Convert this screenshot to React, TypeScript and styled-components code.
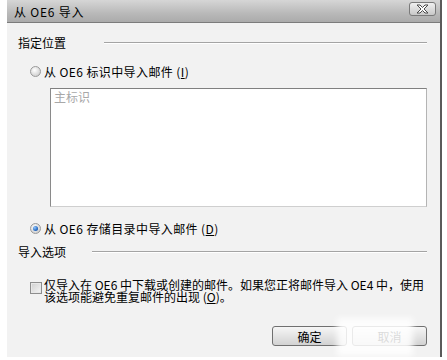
import React from 'react';
import styled, { createGlobalStyle } from 'styled-components';

const GlobalStyle = createGlobalStyle`
  html, body {
    margin: 0;
    padding: 0;
    background: #ffffff;
  }
  body {
    font-family: 'Noto Sans CJK SC', 'DejaVu Sans', sans-serif;
    font-size: 12px;
    color: #000;
  }
`;

const Page = styled.div`
  width: 447px;
  height: 360px;
  padding-left: 7px;
  box-sizing: border-box;
  overflow: hidden;
`;

const Dialog = styled.div`
  position: relative;
  width: 435px;
  height: 357px;
  display: flex;
  flex-direction: column;
  background: #f2f2f2;
  border-right: 2px solid #5a5a5a;
  box-sizing: border-box;
`;

const TitleBar = styled.div`
  height: 22px;
  flex: none;
  display: flex;
  align-items: center;
  justify-content: space-between;
  padding: 0 4px 0 7px;
  background: linear-gradient(#d6d6d6, #b9b9b9 60%, #ababab);
  border-bottom: 1px solid #7c7c7c;
  font-size: 12px;
  letter-spacing: 0.8px;
`;

const CloseButton = styled.div`
  width: 27px;
  height: 14px;
  margin-top: -4px;
  display: flex;
  align-items: center;
  justify-content: center;
  border: 1px solid #7a7a7a;
  border-radius: 3px;
  background: linear-gradient(#f0f0f0, #c8c8c8);
  box-sizing: border-box;
`;

const Content = styled.div`
  flex: 1;
  display: flex;
  flex-direction: column;
  padding: 12px 13px 0 11px;
`;

const Heading = styled.div`
  display: flex;
  align-items: center;
  height: 16px;
  line-height: 16px;
  margin-top: ${(p: { $top: number }) => p.$top}px;
`;

const HeadingRule = styled.div`
  flex: 1;
  height: 1px;
  margin-left: ${(p: { $gap: number }) => p.$gap}px;
  background: #a4a4a4;
  border-bottom: 1px solid #ffffff;
`;

const OptionRow = styled.label`
  display: flex;
  align-items: center;
  height: 16px;
  margin-left: 12px;
  margin-top: ${(p: { $top: number }) => p.$top}px;
  gap: 3px;
  white-space: pre;
  letter-spacing: 0.4px;
`;

const Radio = styled.span<{ $checked?: boolean }>`
  width: 11px;
  height: 11px;
  border-radius: 50%;
  box-sizing: border-box;
  border: 1px solid #9a9a9a;
  background: radial-gradient(circle at 40% 35%, #ffffff, #d4d4d4 70%, #bcbcbc);
  display: flex;
  align-items: center;
  justify-content: center;

  &::after {
    content: '';
    display: ${(p) => (p.$checked ? 'block' : 'none')};
    width: 5px;
    height: 5px;
    border-radius: 50%;
    background: radial-gradient(circle at 35% 35%, #8fc6ff, #1c5fb8 70%, #0d3a80);
  }
`;

const Mnemonic = styled.span`
  text-decoration: underline;
`;

const TextBox = styled.div`
  margin: 9px 0 0 32px;
  height: 119px;
  background: #ffffff;
  border-top: 1px solid #808080;
  border-left: 1px solid #8a8a8a;
  border-right: 1px solid #b4b4b4;
  border-bottom: 1px solid #cfcfcf;
  box-sizing: border-box;
  padding: 0 3px;
  color: #a8a8a8;
  line-height: 16px;
`;

const CheckRow = styled.div`
  display: flex;
  align-items: flex-start;
  gap: 2px;
  margin: 19px 0 0 12px;
`;

const CheckBox = styled.span`
  flex: none;
  width: 12px;
  height: 12px;
  margin-top: 3px;
  box-sizing: border-box;
  border: 1px solid #8e8e8e;
  background: linear-gradient(135deg, #cfcfcf, #f6f6f6);
  box-shadow: inset 0 0 0 1px #e8e8e8;
`;

const CheckText = styled.div`
  display: flex;
  flex-direction: column;
  white-space: pre;
`;

const CheckLine = styled.div`
  height: 12px;
  line-height: 12px;
`;

const ButtonBar = styled.div`
  display: flex;
  justify-content: flex-end;
  gap: 5px;
  margin: auto 0 11px 0;
`;

const Button = styled.div`
  width: 75px;
  height: 20px;
  display: flex;
  align-items: center;
  justify-content: center;
  box-sizing: border-box;
  border: 1px solid #707070;
  border-radius: 3px;
  background: linear-gradient(#f6f6f6, #e4e4e4 50%, #d2d2d2);
  font-size: 12px;
`;

const Watermark = styled.div`
  position: absolute;
  left: 330px;
  top: 318px;
  width: 76px;
  height: 38px;
  background: rgba(255, 255, 255, 0.85);
  filter: blur(3px);
`;

function CloseIcon() {
  return (
    <svg width="15" height="10" viewBox="0 0 15 10">
      <path
        d="M2 1 L5 1 L7.5 3.5 L10 1 L13 1 L9 5 L13 9 L10 9 L7.5 6.5 L5 9 L2 9 L6 5 Z"
        fill="#ffffff"
        stroke="#4a4a4a"
        strokeWidth="1"
        strokeLinejoin="round"
      />
    </svg>
  );
}

export default function App() {
  return (
    <Page>
      <GlobalStyle />
      <Dialog>
        <TitleBar>
          <span>从 OE6 导入</span>
          <CloseButton>
            <CloseIcon />
          </CloseButton>
        </TitleBar>
        <Content>
          <Heading $top={0}>
            指定位置
            <HeadingRule $gap={38} />
          </Heading>
          <OptionRow $top={12}>
            <Radio />
            <span>
              从 OE6 标识中导入邮件 (<Mnemonic>I</Mnemonic>)
            </span>
          </OptionRow>
          <TextBox>主标识</TextBox>
          <OptionRow $top={13}>
            <Radio $checked />
            <span>
              从 OE6 存储目录中导入邮件 (<Mnemonic>D</Mnemonic>)
            </span>
          </OptionRow>
          <Heading $top={8}>
            导入选项
            <HeadingRule $gap={26} />
          </Heading>
          <CheckRow>
            <CheckBox />
            <CheckText>
              <CheckLine>{'仅导入在 OE6 中下载或创建的邮件。如果您正将邮件导入 OE4 中，使用'}</CheckLine>
              <CheckLine>
                该选项能避免重复邮件的出现 (<Mnemonic>O</Mnemonic>)。
              </CheckLine>
            </CheckText>
          </CheckRow>
          <ButtonBar>
            <Button>确定</Button>
            <Button>取消</Button>
          </ButtonBar>
        </Content>
        <Watermark />
      </Dialog>
    </Page>
  );
}
